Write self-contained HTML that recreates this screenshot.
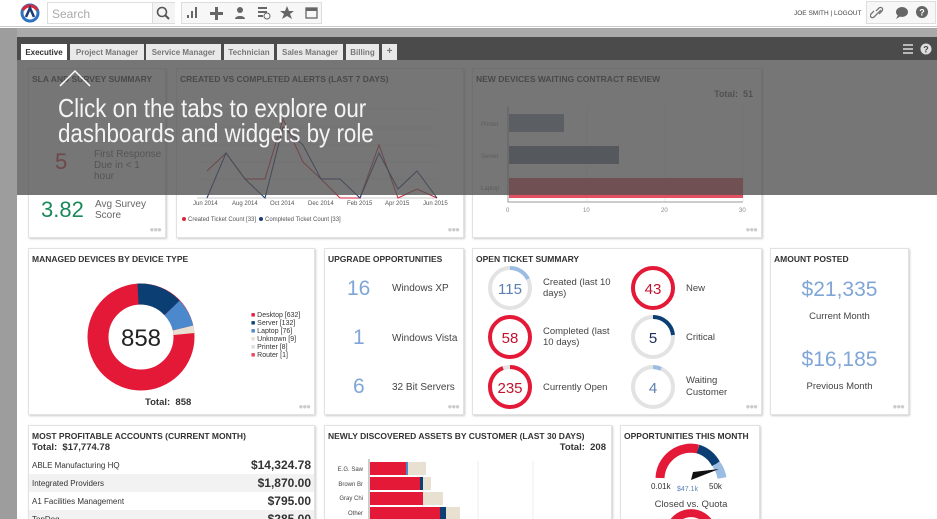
<!DOCTYPE html>
<html><head><meta charset="utf-8"><style>
*{margin:0;padding:0;box-sizing:border-box}
html,body{width:937px;height:519px;overflow:hidden}
body{background:#fff;font-family:"Liberation Sans",Verdana,sans-serif;position:relative;color:#333}
.abs{position:absolute}
.w{position:absolute;background:#fff;border:1px solid #e2e2e2;box-shadow:1px 1px 2px #ccc}
.t{position:absolute;left:3px;top:5px;font-size:8.5px;font-weight:bold;color:#333;letter-spacing:0}
.dots{position:absolute;right:4px;bottom:3px;font-size:8px;color:#ccc;letter-spacing:-1px}
.tab{position:absolute;top:44px;height:16px;background:#e9e9e9;font-size:8px;font-weight:bold;color:#777;padding:4px 0 0;text-align:center;white-space:nowrap}
</style></head><body>
<!-- top bar -->
<div class="abs" style="left:0;top:0;width:937px;height:27px;background:#fff;border-bottom:1px solid #ccc"></div>
<svg class="abs" style="left:20px;top:3px" width="20" height="20" viewBox="0 0 20 20"><circle cx="10" cy="10" r="8" fill="none" stroke="#2e72c0" stroke-width="3"/><path d="M3 7 A8 8 0 0 1 17 7" fill="none" stroke="#d9263b" stroke-width="3"/><path d="M6 14 L10 5 L14 14" fill="none" stroke="#1b3d75" stroke-width="2.5"/></svg>
<div class="abs" style="left:47px;top:2px;width:128px;height:22px;border:1px solid #ddd;background:#fff"><span style="position:absolute;left:4px;top:4px;font-size:12px;color:#aaa">Search</span><div style="position:absolute;left:104px;top:0;width:23px;height:20px;border-left:1px solid #ddd;background:#f4f4f4"></div><svg style="position:absolute;left:108px;top:3px" width="14" height="14"><circle cx="6" cy="6" r="4.5" fill="none" stroke="#555" stroke-width="1.6"/><path d="M9 9l4 4" stroke="#555" stroke-width="2"/></svg></div>
<div class="abs" style="left:181px;top:2px;width:141px;height:22px;border:1px solid #ddd;background:#f7f7f7"></div>
<svg class="abs" style="left:185px;top:5px" width="135" height="16" fill="#666"><rect x="2" y="10" width="2" height="3"/><rect x="6" y="6" width="2" height="7"/><rect x="10" y="2" width="2" height="11"/><path d="M30 2h3v5h5v3h-5v5h-3v-5h-5v-3h5z"/><circle cx="55" cy="5" r="3"/><path d="M50 14c0-4 10-4 10 0z"/><path d="M73 2h9v2h-9zM73 6h9v2h-9zM73 10h5v2h-5z"/><circle cx="82" cy="11" r="3" fill="none" stroke="#666"/><path d="M102 1l2 5h5l-4 3 2 5-5-3-5 3 2-5-4-3h5z"/><rect x="121" y="3" width="11" height="10" fill="none" stroke="#666" stroke-width="1.3"/><rect x="121" y="3" width="11" height="3"/></svg>
<div class="abs" style="left:794px;top:10px;font-size:6.5px;color:#444">JOE SMITH | LOGOUT</div>
<div class="abs" style="left:866px;top:1px;width:70px;height:23px;border:1px solid #ddd;background:#f7f7f7"></div>
<svg class="abs" style="left:870px;top:4px" width="66" height="18"><path d="M4 13l7-7m-5 1l3-3a2 2 0 0 1 3 3l-3 3m-2 0l-3 3a2 2 0 0 1-3-3l3-3" fill="none" stroke="#777" stroke-width="1.3"/><ellipse cx="32" cy="8" rx="6" ry="5" fill="#666"/><path d="M28 11l-2 4 5-3z" fill="#666"/><circle cx="52" cy="8" r="6" fill="#666"/><text x="52" y="11.5" font-size="9" font-weight="bold" fill="#fff" text-anchor="middle" font-family="Liberation Sans">?</text></svg>
<!-- gray frame -->
<div class="abs" style="left:0;top:28px;width:937px;height:10px;background:#a9a9a9"></div>
<div class="abs" style="left:0;top:28px;width:17px;height:491px;background:#9d9d9d"></div>
<div class="abs" style="left:17px;top:37px;width:920px;height:23px;background:#4b4b4b"></div>
<div class="tab" style="left:21px;width:46px;background:#fff;color:#333">Executive</div>
<div class="tab" style="left:70px;width:74px">Project Manager</div>
<div class="tab" style="left:146px;width:75px">Service Manager</div>
<div class="tab" style="left:224px;width:50px">Technician</div>
<div class="tab" style="left:277px;width:66px">Sales Manager</div>
<div class="tab" style="left:346px;width:33px">Billing</div>
<div class="tab" style="left:382px;width:15px;font-size:10px;padding-top:2px">+</div>
<svg class="abs" style="left:902px;top:43px" width="32" height="12"><path d="M1 2h10M1 6h10M1 10h10" stroke="#ddd" stroke-width="1.5"/><circle cx="24" cy="6" r="5.5" fill="#ddd"/><text x="24" y="9.5" font-size="9" font-weight="bold" fill="#4b4b4b" text-anchor="middle" font-family="Liberation Sans">?</text></svg>

<!-- row 1 -->
<div class="w" style="left:28px;top:68px;width:138px;height:170px"><div class="t">SLA AND SURVEY SUMMARY</div>
<div class="abs" style="left:26px;top:80px;font-size:22px;color:#d9263b">5</div><div class="abs" style="left:65px;top:80px;font-size:10px;color:#666">First Response<br>Due in &lt; 1<br>hour</div>
<div class="abs" style="left:12px;top:128px;font-size:22px;color:#1a8a5a">3.82</div><div class="abs" style="left:66px;top:130px;font-size:10px;color:#666;line-height:11px">Avg Survey<br>Score</div><div class="dots">●●●</div></div>
<div class="w" style="left:176px;top:68px;width:288px;height:170px"><div class="t">CREATED VS COMPLETED ALERTS (LAST 7 DAYS)</div>
<svg class="abs" style="left:0;top:0" width="288" height="170"><g stroke="#eee"><path d="M20 40h240M20 59h240M20 76h240M20 93h240M20 110h240"/></g><path d="M20 129h240" stroke="#ccc"/>
<polyline points="30,102 49,84 68,110 88,110 106,50 126,93 144,110 163,129 183,129 202,76 221,129 240,120 260,129" fill="none" stroke="#d9263b" stroke-width="1"/>
<polyline points="30,129 49,84 68,110 88,129 106,58 126,76 144,110 163,110 183,129 202,84 221,120 240,102 260,129" fill="none" stroke="#1b3d75" stroke-width="1"/>
<g font-size="6" fill="#555" font-family="Liberation Sans"><text x="16" y="136">Jun 2014</text><text x="55" y="136">Aug 2014</text><text x="93" y="136">Oct 2014</text><text x="131" y="136">Dec 2014</text><text x="170" y="136">Feb 2015</text><text x="208" y="136">Apr 2015</text><text x="246" y="136">Jun 2015</text>
<circle cx="7" cy="150" r="2" fill="#d9263b"/><text x="11" y="152">Created Ticket Count [33]</text><circle cx="84" cy="150" r="2" fill="#1b3d75"/><text x="88" y="152">Completed Ticket Count [33]</text></g></svg><div class="dots">●●●</div></div>
<div class="w" style="left:472px;top:68px;width:290px;height:170px"><div class="t">NEW DEVICES WAITING CONTRACT REVIEW</div>
<div class="abs" style="right:8px;top:20px;font-size:9px;font-weight:bold;color:#555">Total:&nbsp; 51</div>
<svg class="abs" style="left:0;top:0" width="290" height="170"><g stroke="#eee"><path d="M114 38v95M192 38v95M270 38v95"/></g><path d="M35 38v95h235" stroke="#999" fill="none"/>
<rect x="36" y="45" width="55" height="18" fill="#8595a8"/><rect x="36" y="77" width="110" height="18" fill="#6a7a8e"/><rect x="36" y="109" width="234" height="20" fill="#d9263b" opacity=".8"/>
<g font-size="6" fill="#888" font-family="Liberation Sans"><text x="8" y="57">Printer</text><text x="8" y="89">Server</text><text x="8" y="121">Laptop</text><text x="33" y="143">0</text><text x="110" y="143">10</text><text x="188" y="143">20</text><text x="266" y="143">30</text></g></svg><div class="dots">●●●</div></div>

<!-- overlay -->
<div class="abs" style="left:17px;top:60px;width:920px;height:135px;background:rgba(80,80,80,.78)"></div>
<svg class="abs" style="left:58px;top:68px" width="34" height="20"><path d="M2 18L17 3L32 18" fill="none" stroke="#fff" stroke-width="1.5"/></svg>
<div class="abs" style="left:58px;top:96px;font-size:26px;line-height:25px;color:#f4f4f4;transform:scaleX(.86);transform-origin:0 0;white-space:nowrap">Click on the tabs to explore our<br>dashboards and widgets by role</div>

<!-- row 2 -->
<div class="w" style="left:28px;top:248px;width:287px;height:167px"><div class="t">MANAGED DEVICES BY DEVICE TYPE</div>
<svg class="abs" style="left:56px;top:32px" width="112" height="112" viewBox="-56 -56 112 112"><circle r="43" fill="none" stroke="#e31937" stroke-width="21"/><path d="M-3 -43 A43 43 0 0 1 31 -29" fill="none" stroke="#0b3f73" stroke-width="21"/><path d="M31 -29 A43 43 0 0 1 42 -9" fill="none" stroke="#4b88cc" stroke-width="21"/><path d="M42 -9 A43 43 0 0 1 43 -3" fill="none" stroke="#e8e0d0" stroke-width="21"/><text y="9" font-size="24" text-anchor="middle" fill="#222" font-family="Liberation Sans">858</text></svg>
<div class="abs" style="left:116px;top:148px;font-size:9.5px;font-weight:bold">Total:&nbsp; 858</div>
<div class="abs" style="left:222px;top:63px;font-size:7px;line-height:8px;color:#333"><span style="color:#e31937">■</span> Desktop [632]<br><span style="color:#0b3f73">■</span> Server [132]<br><span style="color:#4b88cc">■</span> Laptop [76]<br><span style="color:#e8e0d0">■</span> Unknown [9]<br><span style="color:#ddd">■</span> Printer [8]<br><span style="color:#e8475e">■</span> Router [1]</div><div class="dots">●●●</div></div>
<div class="w" style="left:324px;top:248px;width:140px;height:167px"><div class="t">UPGRADE OPPORTUNITIES</div>
<div class="abs" style="left:22px;top:28px;font-size:21px;color:#7fa6d6">16</div><div class="abs" style="left:67px;top:34px;font-size:10px;color:#444">Windows XP</div>
<div class="abs" style="left:28px;top:77px;font-size:21px;color:#7fa6d6">1</div><div class="abs" style="left:67px;top:84px;font-size:10px;color:#444">Windows Vista</div>
<div class="abs" style="left:28px;top:126px;font-size:21px;color:#7fa6d6">6</div><div class="abs" style="left:67px;top:133px;font-size:10px;color:#444">32 Bit Servers</div><div class="dots">●●●</div></div>
<div class="w" style="left:472px;top:248px;width:290px;height:167px"><div class="t">OPEN TICKET SUMMARY</div>
<svg class="abs" style="left:0;top:0" width="290" height="167" font-family="Liberation Sans">
<g fill="none" stroke-width="4"><circle cx="37" cy="39" r="20" stroke="#e3e3e3"/><path d="M37 19A20 20 0 0 1 55 30" stroke="#9cbde3"/>
<circle cx="37" cy="88" r="20" stroke="#e31937"/>
<circle cx="37" cy="138" r="20" stroke="#e3e3e3"/><path d="M37 118A20 20 0 1 1 17 138" stroke="#e31937"/><path d="M17 138A20 20 0 0 1 30 119" stroke="#e31937"/>
<circle cx="180" cy="39" r="20" stroke="#e31937"/>
<circle cx="180" cy="88" r="20" stroke="#e3e3e3"/><path d="M180 68A20 20 0 0 1 200 86" stroke="#0b3f73"/>
<circle cx="180" cy="138" r="20" stroke="#e3e3e3"/><path d="M180 118A20 20 0 0 1 188 120" stroke="#9cbde3"/></g>
<g font-size="15" text-anchor="middle"><text x="37" y="45" fill="#5a7fb0">115</text><text x="37" y="94" fill="#c0142e">58</text><text x="37" y="144" fill="#c0142e">235</text><text x="180" y="45" fill="#c0142e">43</text><text x="180" y="94" fill="#1b2d5a">5</text><text x="180" y="144" fill="#5a7fb0">4</text></g>
<g font-size="9.5" fill="#444"><text x="70" y="36">Created (last 10</text><text x="70" y="47">days)</text><text x="70" y="85">Completed (last</text><text x="70" y="96">10 days)</text><text x="70" y="141">Currently Open</text><text x="213" y="42">New</text><text x="213" y="91">Critical</text><text x="213" y="134">Waiting</text><text x="213" y="146">Customer</text></g></svg><div class="dots">●●●</div></div>
<div class="w" style="left:770px;top:248px;width:139px;height:167px"><div class="t">AMOUNT POSTED</div>
<div class="abs" style="left:0;width:137px;top:29px;text-align:center;font-size:21px;color:#7fa6d6">$21,335</div><div class="abs" style="left:0;width:137px;top:62px;text-align:center;font-size:9.5px;color:#444">Current Month</div>
<div class="abs" style="left:0;width:137px;top:99px;text-align:center;font-size:21px;color:#7fa6d6">$16,185</div><div class="abs" style="left:0;width:137px;top:132px;text-align:center;font-size:9.5px;color:#444">Previous Month</div><div class="dots">●●●</div></div>

<!-- row 3 -->
<div class="w" style="left:28px;top:425px;width:287px;height:100px"><div class="t">MOST PROFITABLE ACCOUNTS (CURRENT MONTH)</div>
<div class="abs" style="left:3px;top:16px;font-size:9.5px;font-weight:bold">Total:&nbsp; $17,774.78</div>
<div class="abs" style="left:0;top:30px;width:285px;height:18px;font-size:8px;padding:5px 3px">ABLE Manufacturing HQ<b style="float:right;font-size:12px;margin-top:-3px">$14,324.78</b></div>
<div class="abs" style="left:0;top:48px;width:285px;height:18px;background:#f2f2f2;font-size:8px;padding:5px 3px">Integrated Providers<b style="float:right;font-size:12px;margin-top:-3px">$1,870.00</b></div>
<div class="abs" style="left:0;top:66px;width:285px;height:18px;font-size:8px;padding:5px 3px">A1 Facilities Management<b style="float:right;font-size:12px;margin-top:-3px">$795.00</b></div>
<div class="abs" style="left:0;top:84px;width:285px;height:18px;background:#f2f2f2;font-size:8px;padding:5px 3px">TopDog<b style="float:right;font-size:12px;margin-top:-3px">$285.00</b></div></div>
<div class="w" style="left:324px;top:425px;width:288px;height:100px"><div class="t">NEWLY DISCOVERED ASSETS BY CUSTOMER (LAST 30 DAYS)</div>
<div class="abs" style="right:5px;top:16px;font-size:9.5px;font-weight:bold">Total:&nbsp; 208</div>
<svg class="abs" style="left:0;top:0" width="288" height="100" font-family="Liberation Sans"><path d="M44 33v70" stroke="#999"/><path d="M98 35v70M153 35v70M208 35v70" stroke="#eee"/>
<rect x="45" y="36" width="36" height="13" fill="#e31937"/><rect x="81" y="36" width="2" height="13" fill="#4b88cc"/><rect x="83" y="36" width="18" height="13" fill="#e8e0d0"/>
<rect x="45" y="51" width="50" height="13" fill="#e31937"/><rect x="95" y="51" width="3" height="13" fill="#0b3f73"/><rect x="98" y="51" width="8" height="13" fill="#e8e0d0"/>
<rect x="45" y="66" width="53" height="13" fill="#e31937"/><rect x="98" y="66" width="20" height="13" fill="#e8e0d0"/>
<rect x="45" y="81" width="70" height="13" fill="#e31937"/><rect x="115" y="81" width="6" height="13" fill="#0b3f73"/><rect x="121" y="81" width="14" height="13" fill="#e8e0d0"/>
<g font-size="6" fill="#444" text-anchor="end"><text x="38" y="45">E.G. Saw</text><text x="38" y="60">Brown Br</text><text x="38" y="74">Gray Chi</text><text x="38" y="89">Other</text></g></svg></div>
<div class="w" style="left:620px;top:425px;width:140px;height:100px"><div class="t">OPPORTUNITIES THIS MONTH</div>
<svg class="abs" style="left:0;top:0" width="140" height="100" font-family="Liberation Sans"><g fill="none" stroke-width="9"><path d="M39 52A31 31 0 0 1 77 23" stroke="#e31937"/><path d="M77 23A31 31 0 0 1 95 38" stroke="#0b3f73"/><path d="M95 38A31 31 0 0 1 101 52" stroke="#9cbde3"/></g>
<path d="M70 54L98 43L72 46z" fill="#111"/>
<text x="30" y="63" font-size="8" fill="#333">0.01k</text><text x="56" y="65" font-size="7" fill="#5a7fb0">$47.1k</text><text x="88" y="63" font-size="8" fill="#333">50k</text>
<text x="70" y="81" font-size="9.5" fill="#444" text-anchor="middle">Closed vs. Quota</text>
<path d="M50 100A22 22 0 0 1 90 100" fill="none" stroke="#e31937" stroke-width="8"/></svg></div>
</body></html>
